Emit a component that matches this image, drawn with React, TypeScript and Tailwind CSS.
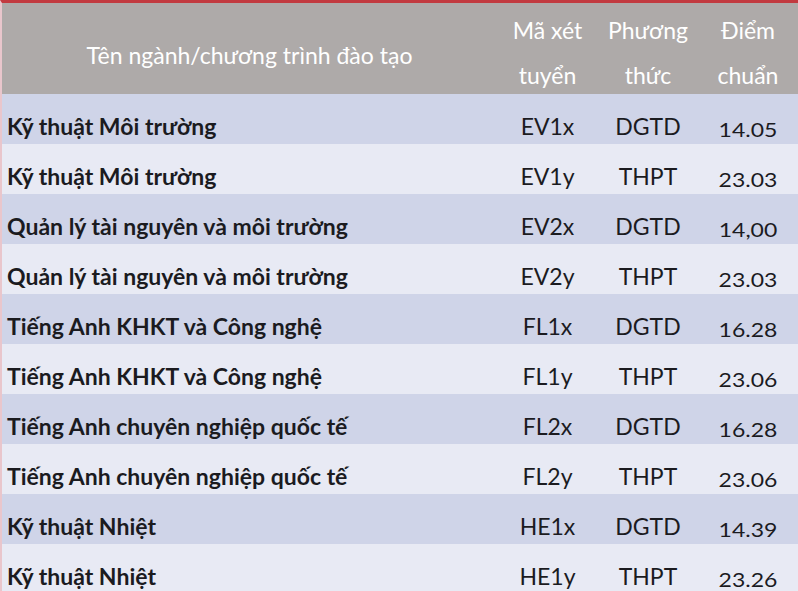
import React from "react";

const rows = [
  { name: "Kỹ thuật Môi trường", code: "EV1x", method: "DGTD", score: "14.05" },
  { name: "Kỹ thuật Môi trường", code: "EV1y", method: "THPT", score: "23.03" },
  { name: "Quản lý tài nguyên và môi trường", code: "EV2x", method: "DGTD", score: "14,00" },
  { name: "Quản lý tài nguyên và môi trường", code: "EV2y", method: "THPT", score: "23.03" },
  { name: "Tiếng Anh KHKT và Công nghệ", code: "FL1x", method: "DGTD", score: "16.28" },
  { name: "Tiếng Anh KHKT và Công nghệ", code: "FL1y", method: "THPT", score: "23.06" },
  { name: "Tiếng Anh chuyên nghiệp quốc tế", code: "FL2x", method: "DGTD", score: "16.28" },
  { name: "Tiếng Anh chuyên nghiệp quốc tế", code: "FL2y", method: "THPT", score: "23.06" },
  { name: "Kỹ thuật Nhiệt", code: "HE1x", method: "DGTD", score: "14.39" },
  { name: "Kỹ thuật Nhiệt", code: "HE1y", method: "THPT", score: "23.26" },
];

export default function App() {
  return (
    <div className="w-[798px] h-[591px] overflow-hidden bg-[#e8eaf4] border-t-[3px] border-t-[#c23a40] border-l-2 border-l-[#e9c6cc] font-['Lato','Noto_Sans',sans-serif] text-[23px]">
      {/* header */}
      <div className="grid grid-cols-[495px_101px_100px_100px] h-[91px] bg-[#aeaaa9] text-white">
        <div className="flex items-center justify-center pt-[9px]">Tên ngành/chương trình đào tạo</div>
        <div className="flex flex-col items-center pt-[5px] leading-[45px]">
          <span>Mã xét</span>
          <span>tuyển</span>
        </div>
        <div className="flex flex-col items-center pt-[5px] leading-[45px]">
          <span>Phương</span>
          <span>thức</span>
        </div>
        <div className="flex flex-col items-center pt-[5px] leading-[45px]">
          <span>Điểm</span>
          <span>chuẩn</span>
        </div>
      </div>
      {rows.map((r, i) => (
        <div
          key={i}
          className={`grid grid-cols-[495px_101px_100px_100px] h-[50px] items-start text-[#1b1b1f] ${
            i % 2 === 0 ? "bg-[#cfd4e8]" : "bg-[#e8eaf4]"
          }`}
        >
          <div className="pl-[5px] pt-[15px] font-bold">{r.name}</div>
          <div className="text-center pt-[15px]">{r.code}</div>
          <div className="text-center pt-[15px]">{r.method}</div>
          <div className="text-center pt-[25px] leading-none">
            <span className="inline-block scale-y-80">{r.score}</span>
          </div>
        </div>
      ))}
    </div>
  );
}
